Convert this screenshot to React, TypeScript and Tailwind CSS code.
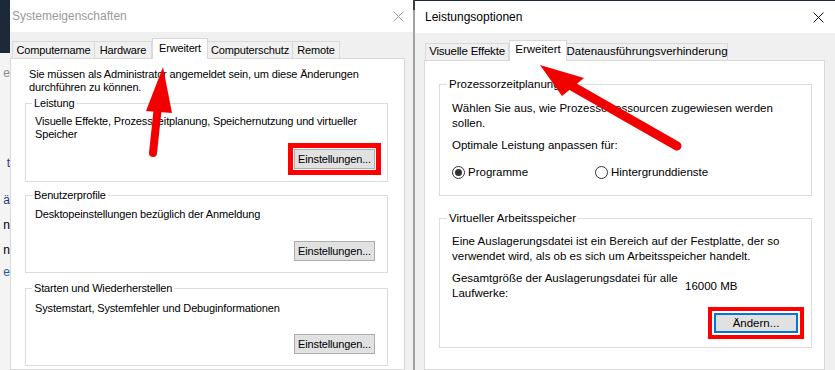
import React from "react";

const Close = ({ color }: { color: string }) => (
  <svg width="11" height="11" viewBox="0 0 11 11">
    <path d="M0.5 0.5 L10.5 10.5 M10.5 0.5 L0.5 10.5" stroke={color} strokeWidth="1" />
  </svg>
);

const Radio = ({ checked }: { checked?: boolean }) => (
  <span className="w-[13px] h-[13px] rounded-full border border-[#333] bg-white flex items-center justify-center shrink-0">
    {checked && <span className="w-[7px] h-[7px] rounded-full bg-[#333]" />}
  </span>
);

const App: React.FC = () => {
  return (
    <div className="relative w-[835px] h-[370px] overflow-hidden flex bg-[#f0f0f0] text-black whitespace-nowrap font-['Liberation_Sans',Arial,sans-serif]">
      {/* window behind, left edge */}
      <div className="w-[10px] h-full flex flex-col overflow-hidden bg-[#f4f4f4]">
        <div className="h-[53px] bg-[#1c2938]" />
        <div className="flex flex-col items-end leading-[14px] text-[12px]">
          <span className="mt-[13px] text-[#8a8a8a]">e</span>
          <span className="mt-[76px] text-[#1e3a6e]">t</span>
          <span className="mt-[23px] text-[#1e3a6e]">ä</span>
          <span className="mt-[11px]">n</span>
          <span className="mt-[11px]">n</span>
          <span className="mt-[8px] text-[#1e5aa8]">e</span>
        </div>
      </div>

      {/* Systemeigenschaften */}
      <div className="w-[403px] h-full flex flex-col bg-[#f0f0f0] text-[11px] tracking-[-0.15px]">
        <div className="h-[32px] bg-white flex items-center justify-between pl-[2px] pr-[9px] shrink-0">
          <span className="text-[12px] tracking-normal text-[#9a9a9a]">Systemeigenschaften</span>
          <Close color="#9a9a9a" />
        </div>
        <div className="flex-1 flex flex-col pt-[6px] pr-[8px]">
          <div className="flex items-end h-[20px] ml-[2px]">
            <div className="w-[83px] h-[17px] border border-b-0 border-[#d9d9d9] flex items-center justify-center">Computername</div>
            <div className="w-[57px] h-[17px] border border-b-0 border-l-0 border-[#d9d9d9] flex items-center justify-center">Hardware</div>
            <div className="relative z-10 w-[56px] h-[21px] -mb-[1px] bg-white border border-b-0 border-[#d9d9d9] flex items-center justify-center pb-[2px]">Erweitert</div>
            <div className="w-[85px] h-[17px] border border-b-0 border-l-0 border-[#d9d9d9] flex items-center justify-center">Computerschutz</div>
            <div className="w-[47px] h-[17px] border border-b-0 border-l-0 border-[#d9d9d9] flex items-center justify-center">Remote</div>
          </div>
          <div className="flex-1 bg-white border border-[#d9d9d9] pt-[9px] pr-[16px] leading-[13px]">
            <p className="ml-[18px]">
              Sie müssen als Administrator angemeldet sein, um diese Änderungen
              <br />
              durchführen zu können.
            </p>

            <fieldset className="ml-[14px] mt-[2px] border border-[#dcdcdc]">
              <legend className="ml-[6px] px-[2px] leading-[14px]">Leistung</legend>
              <div className="pl-[9px] pr-[12px] pb-[12px] flex flex-col">
                <p className="mt-[5px]">
                  Visuelle Effekte, Prozesszeitplanung, Speichernutzung und virtueller
                  <br />
                  Speicher
                </p>
                <button className="self-end mt-[8px] w-[81px] h-[20px] bg-[#e1e1e1] border border-[#adadad] outline-[5px] outline-solid outline-[#ff0000] outline-offset-[1px]">
                  Einstellungen...
                </button>
              </div>
            </fieldset>

            <fieldset className="ml-[14px] mt-[6px] border border-[#dcdcdc]">
              <legend className="ml-[6px] px-[2px] leading-[14px]">Benutzerprofile</legend>
              <div className="pl-[9px] pr-[12px] pb-[11px] flex flex-col">
                <p className="mt-[6px]">Desktopeinstellungen bezüglich der Anmeldung</p>
                <button className="self-end mt-[20px] w-[81px] h-[20px] bg-[#e1e1e1] border border-[#adadad]">
                  Einstellungen...
                </button>
              </div>
            </fieldset>

            <fieldset className="ml-[14px] mt-[8px] border border-[#dcdcdc]">
              <legend className="ml-[6px] px-[2px] leading-[14px]">Starten und Wiederherstellen</legend>
              <div className="pl-[9px] pr-[12px] pb-[11px] flex flex-col">
                <p className="mt-[7px]">Systemstart, Systemfehler und Debuginformationen</p>
                <button className="self-end mt-[19px] w-[81px] h-[20px] bg-[#e1e1e1] border border-[#adadad]">
                  Einstellungen...
                </button>
              </div>
            </fieldset>
          </div>
        </div>
      </div>

      {/* gap between windows */}
      <div className="w-[2px] h-full flex flex-col bg-[#a2a2a2]">
        <div className="h-[10px] bg-[#3a3f46]" />
      </div>

      {/* Leistungsoptionen */}
      <div className="flex-1 h-full flex flex-col bg-[#f0f0f0] border-t border-[#1c2938] text-[11.5px]">
        <div className="h-[32px] bg-white flex items-center justify-between pl-[10px] pr-[11px] shrink-0">
          <span className="text-[12px]">Leistungsoptionen</span>
          <Close color="#111" />
        </div>
        <div className="flex-1 flex flex-col pt-[7px] pl-[9px] pr-[10px]">
          <div className="flex items-end h-[20px] ml-[1px]">
            <div className="w-[84px] h-[17px] border border-b-0 border-[#d9d9d9] flex items-center justify-center tracking-[-0.2px]">Visuelle Effekte</div>
            <div className="relative z-10 w-[58px] h-[21px] -mb-[1px] bg-white border border-b-0 border-[#d9d9d9] flex items-center justify-center pb-[2px]">Erweitert</div>
            <div className="w-[161px] h-[17px] border border-b-0 border-l-0 border-[#d9d9d9] flex items-center justify-center">Datenausführungsverhinderung</div>
          </div>
          <div className="flex-1 bg-white border border-[#d9d9d9] pt-[16px] pl-[14px] pr-[12px] leading-[15px]">
            <fieldset className="border border-[#dcdcdc]">
              <legend className="ml-[7px] px-[2px] leading-[14px]">Prozessorzeitplanung</legend>
              <div className="pl-[12px] pb-[15px]">
                <p className="mt-[10px]">
                  Wählen Sie aus, wie Prozessorressourcen zugewiesen werden
                  <br />
                  sollen.
                </p>
                <p className="mt-[7px]">Optimale Leistung anpassen für:</p>
                <div className="mt-[12px] flex items-center h-[15px]">
                  <label className="w-[143px] flex items-center gap-[3px]">
                    <Radio checked />
                    <span>Programme</span>
                  </label>
                  <label className="flex items-center gap-[3px]">
                    <Radio />
                    <span>Hintergrunddienste</span>
                  </label>
                </div>
              </div>
            </fieldset>

            <fieldset className="mt-[15px] border border-[#dcdcdc]">
              <legend className="ml-[7px] px-[2px] leading-[14px]">Virtueller Arbeitsspeicher</legend>
              <div className="pl-[12px] pr-[13px] pb-[14px] flex flex-col">
                <p className="mt-[9px]">
                  Eine Auslagerungsdatei ist ein Bereich auf der Festplatte, der so
                  <br />
                  verwendet wird, als ob es sich um Arbeitsspeicher handelt.
                </p>
                <div className="mt-[7px] flex items-center">
                  <p className="w-[233px]">
                    Gesamtgröße der Auslagerungsdatei für alle
                    <br />
                    Laufwerke:
                  </p>
                  <span>16000 MB</span>
                </div>
                <button className="self-end mt-[12px] w-[84px] h-[20px] bg-[#e1e1e1] border-2 border-[#0078d7] outline-[4px] outline-solid outline-[#ff0000] outline-offset-[2px]">
                  Ändern...
                </button>
              </div>
            </fieldset>
          </div>
        </div>
      </div>

      {/* red annotation arrows */}
      <svg className="absolute inset-0 pointer-events-none" width="835" height="370" viewBox="0 0 835 370">
        <line x1="153" y1="153" x2="158" y2="106" stroke="#f20000" strokeWidth="8" strokeLinecap="round" />
        <polygon points="163,67 172,113 146,111" fill="#f20000" />
        <line x1="677" y1="146" x2="570" y2="85" stroke="#f20000" strokeWidth="9" strokeLinecap="round" />
        <polygon points="540,65 584,78 562,96" fill="#f20000" />
      </svg>
    </div>
  );
};

export default App;
